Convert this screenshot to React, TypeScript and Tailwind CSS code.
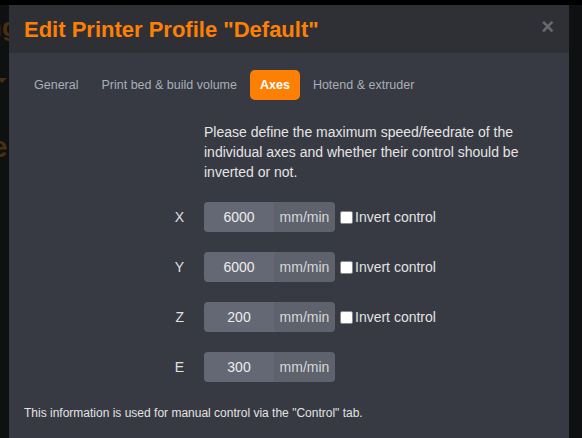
import React from "react";

const rows = [
  { axis: "X", value: "6000", invert: true },
  { axis: "Y", value: "6000", invert: true },
  { axis: "Z", value: "200", invert: true },
  { axis: "E", value: "300", invert: false },
];

const tabs = ["General", "Print bed & build volume", "Axes", "Hotend & extruder"];

export default function App() {
  return (
    <div className="relative w-[582px] h-[438px] overflow-hidden bg-[#0f1012] font-['Liberation_Sans',Arial,sans-serif]">
      {/* dimmed page content behind the modal */}
      <div className="absolute left-[-14px] top-[14px] text-[26px] font-bold leading-none text-[#4a2f0e]">ng</div>
      <div className="absolute left-0 top-[78px] h-0 w-0 border-l-[5px] border-r-[5px] border-t-[5px] border-l-transparent border-r-transparent border-t-[#4a2f0e] ml-[-3px]" />
      <div className="absolute left-[-9px] top-[132px] text-[30px] font-bold leading-none text-[#4a2f0e]">e</div>
      <div className="absolute left-0 top-0 w-full h-[5px] bg-black" />

      <div className="relative pl-[9px] pt-[5px]">
        <div className="w-[560px] h-[460px] bg-[#373a42]">
          <div className="flex h-[48px] items-center justify-between bg-[#2f3036] pl-[15px] pr-[15px]">
            <h3 className="text-[22px] font-bold leading-none text-[#fd8005] mt-[1px]">Edit Printer Profile "Default"</h3>
            <span className="text-[22px] font-bold leading-none text-[#68696e] mt-[-4px]">×</span>
          </div>

          <div className="px-[15px] pt-[17px]">
            <div className="flex gap-[3px]">
              {tabs.map((t) => (
                <div
                  key={t}
                  className={
                    t === "Axes"
                      ? "h-[30px] rounded-[5px] bg-[#fd8005] px-[10px] flex items-center text-[12.5px] font-bold text-white"
                      : "h-[30px] rounded-[5px] px-[10px] flex items-center text-[12.5px] text-[#a8afb8]"
                  }
                >
                  {t}
                </div>
              ))}
            </div>

            <p className="mt-[22px] ml-[180px] w-[340px] text-[14px] leading-[20px] text-[#e4e4e4]">
              Please define the maximum speed/feedrate of the individual axes and whether their control should be inverted or not.
            </p>

            <div className="mt-[20px] flex flex-col gap-[20px]">
              {rows.map((r) => (
                <div key={r.axis} className="flex h-[30px] items-center">
                  <div className="w-[160px] text-right text-[14px] text-[#e0e0e0]">{r.axis}</div>
                  <div className="ml-[20px] flex h-[30px] w-[131px] overflow-hidden rounded-[4px] text-[14px]">
                    <div className="flex w-[70px] items-center justify-center bg-[#636874] text-[#ececec]">{r.value}</div>
                    <div className="flex flex-1 items-center justify-center bg-[#5d626c] text-[#d8d8d8]">mm/min</div>
                  </div>
                  {r.invert && (
                    <div className="ml-[5px] flex items-center">
                      <span className="h-[13px] w-[13px] rounded-[2px] border border-[#8a8a8a] bg-white" />
                      <span className="ml-[2px] text-[14px] text-[#e2e2e2]">Invert control</span>
                    </div>
                  )}
                </div>
              ))}
            </div>

            <p className="mt-[23px] text-[12px] leading-[16px] text-[#e2e2e2]">
              This information is used for manual control via the "Control" tab.
            </p>
          </div>
        </div>
      </div>
    </div>
  );
}
